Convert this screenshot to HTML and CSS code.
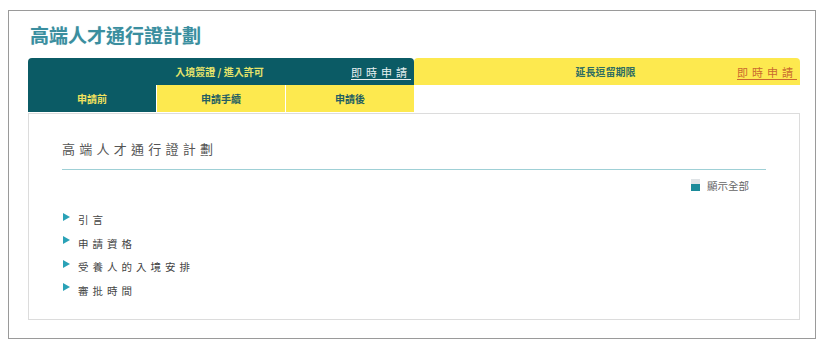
FILE: index.html
```html
<!DOCTYPE html>
<html lang="zh-Hant">
<head>
<meta charset="utf-8">
<title>高端人才通行證計劃</title>
<link rel="stylesheet" href="styles.css">
</head>
<body>
<div class="frame">
  <h1 class="page-title">高端人才通行證計劃</h1>
  <div class="tabs-top">
    <div class="half half-teal">
      <span class="half-title">入境簽證 / 進入許可</span>
      <a class="apply apply-light" href="#">即時申請</a>
    </div>
    <div class="half half-yellow">
      <span class="half-title">延長逗留期限</span>
      <a class="apply apply-orange" href="#">即時申請</a>
    </div>
  </div>
  <div class="tabs-sub">
    <div class="sub active">申請前</div>
    <div class="sub">申請手續</div>
    <div class="sub">申請後</div>
  </div>
  <div class="content">
    <h2 class="heading">高端人才通行證計劃</h2>
    <div class="toggle-row">
      <span class="toggle-icon"></span>
      <span class="toggle-text">顯示全部</span>
    </div>
    <ul class="items">
      <li><span class="arrow"></span><span class="item-text">引言</span></li>
      <li><span class="arrow"></span><span class="item-text">申請資格</span></li>
      <li><span class="arrow"></span><span class="item-text">受養人的入境安排</span></li>
      <li><span class="arrow"></span><span class="item-text">審批時間</span></li>
    </ul>
  </div>
</div>
</body>
</html>
```

FILE: styles.css
```css
* { box-sizing: border-box; }
html, body { margin: 0; padding: 0; background: #fff; }
body {
  font-family: "Noto Sans CJK TC", "Noto Sans", sans-serif;
}
.frame {
  margin: 10px 0 0 8px;
  width: 808px;
  height: 329px;
  border: 1px solid #9a9a9a;
  padding: 12px 15px 0 19px;
}
.page-title {
  margin: 0 0 11px 2px;
  font-size: 19px;
  line-height: 24px;
  font-weight: 700;
  color: #3a8e9f;
  text-shadow: 0 0 1px rgba(58,142,159,0.25);
}
.tabs-top {
  display: flex;
  height: 27px;
}
.half {
  flex: 1;
  display: grid;
  grid-template-columns: 1fr auto 1fr;
  align-items: center;
  border-radius: 4px 4px 0 0;
  padding-right: 3px;
}
.half-title {
  grid-column: 2;
  font-size: 10px;
  font-weight: 700;
}
.half-teal { background: #0b5b65; }
.half-teal .half-title { color: #e6e46a; }
.half-yellow { background: #fde94f; }
.half-yellow .half-title { color: #2f6d62; }
.apply {
  grid-column: 3;
  justify-self: end;
  font-size: 11px;
  font-weight: 400;
  letter-spacing: 4px;
  text-decoration: underline;
  text-underline-offset: 2px;
}
.apply-light { color: #e9f1f1; }
.apply-orange { color: #c9692e; }
.tabs-sub {
  display: flex;
  gap: 1px;
  width: 386px;
  height: 27px;
}
.sub {
  flex: 1;
  display: flex;
  align-items: center;
  justify-content: center;
  font-size: 10px;
  font-weight: 700;
  background: #fde94f;
  color: #245e62;
}
.sub.active {
  background: #0b5b65;
  color: #f0e15e;
}
.content {
  margin-top: 1px;
  height: 207px;
  border: 1px solid #dcdcdc;
  padding: 25px 33px 0 33px;
}
.heading {
  margin: 0;
  font-size: 13px;
  line-height: 20px;
  font-weight: 400;
  letter-spacing: 4.25px;
  color: #555;
  padding-bottom: 10px;
  border-bottom: 1px solid #9fd0d6;
}
.toggle-row {
  display: flex;
  justify-content: flex-end;
  align-items: center;
  gap: 7px;
  height: 16px;
  margin-top: 7px;
  margin-right: 17px;
}
.toggle-icon {
  width: 9px;
  height: 12px;
  background: linear-gradient(to bottom, #dfe3e6 0, #dfe3e6 45%, #1b8a99 45%, #1b8a99 100%);
}
.toggle-text {
  font-size: 10.5px;
  color: #666;
}
.items {
  list-style: none;
  margin: 15px 0 0 0;
  padding: 0;
}
.items li {
  display: flex;
  align-items: center;
  height: 23.5px;
}
.arrow {
  width: 0;
  height: 0;
  border-top: 4px solid transparent;
  border-bottom: 4px solid transparent;
  border-left: 7px solid #2aa2b7;
  margin: 0 8px 6px 1px;
}
.item-text {
  font-size: 10.5px;
  letter-spacing: 4px;
  color: #444;
}
```
